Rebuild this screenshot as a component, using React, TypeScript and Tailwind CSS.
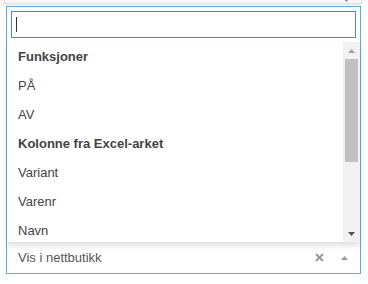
import React from "react";

const items: { label: string; bold?: boolean }[] = [
  { label: "Funksjoner", bold: true },
  { label: "PÅ" },
  { label: "AV" },
  { label: "Kolonne fra Excel-arket", bold: true },
  { label: "Variant" },
  { label: "Varenr" },
  { label: "Navn" },
];

export default function App() {
  return (
    <div
      className="w-[368px] h-[284px] bg-white overflow-hidden relative"
      style={{ fontFamily: '"Liberation Sans", Arial, sans-serif' }}
    >
      {/* previous select, partially visible */}
      <div className="absolute left-[4px] top-[-20px] w-[358px] h-[24px] bg-[#f7f7f7] border border-[#e2e2e2] shadow-[0_1px_3px_rgba(0,0,0,0.12)]">
        <svg className="absolute right-[10px] bottom-[1px]" width="9" height="5" viewBox="0 0 9 5">
          <path d="M0 0 L9 0 L4.5 5 Z" fill="#888" />
        </svg>
      </div>
      <div className="absolute left-[6px] top-[6px] w-[355px] h-[268px] border border-[#5aaae6] bg-white flex flex-col">
        <div className="p-[4px] pb-[4px]">
          <div className="h-[27px] border border-[#4b89b8] flex items-center pl-[4px]">
            <div className="w-px h-[15px] bg-[#333]" />
          </div>
        </div>
        <div className="flex h-[200px] relative z-10 bg-white shadow-[0_4px_6px_rgba(0,0,0,0.12)]">
          <div className="flex-1 overflow-hidden">
            {items.map((it, i) => (
              <div
                key={i}
                className={`h-[29px] flex items-center pl-[11px] text-[13px] text-[#444] ${
                  it.bold ? "font-bold" : ""
                }`}
              >
                {it.label}
              </div>
            ))}
          </div>
          <div className="w-[17px] bg-[#f1f1f1] flex flex-col items-center">
            <div className="h-[17px] flex items-center justify-center">
              <svg width="7" height="4" viewBox="0 0 7 4">
                <path d="M0 4 L7 4 L3.5 0 Z" fill="#a3a3a3" />
              </svg>
            </div>
            <div className="w-[13px] h-[103px] bg-[#c1c1c1]" />
            <div className="flex-1" />
            <div className="h-[17px] flex items-center justify-center">
              <svg width="7" height="4" viewBox="0 0 7 4">
                <path d="M0 0 L7 0 L3.5 4 Z" fill="#505050" />
              </svg>
            </div>
          </div>
        </div>
        <div className="flex-1 flex items-center pl-[11px] pr-[12px]">
          <span className="flex-1 text-[13px] text-[#555]">Vis i nettbutikk</span>
          <svg width="9" height="9" viewBox="0 0 9 9" className="mr-[17px]">
            <path d="M1 1 L8 8 M8 1 L1 8" stroke="#999" strokeWidth="2" />
          </svg>
          <svg width="7" height="4" viewBox="0 0 7 4">
            <path d="M0 4 L7 4 L3.5 0 Z" fill="#999" />
          </svg>
        </div>
      </div>
    </div>
  );
}
